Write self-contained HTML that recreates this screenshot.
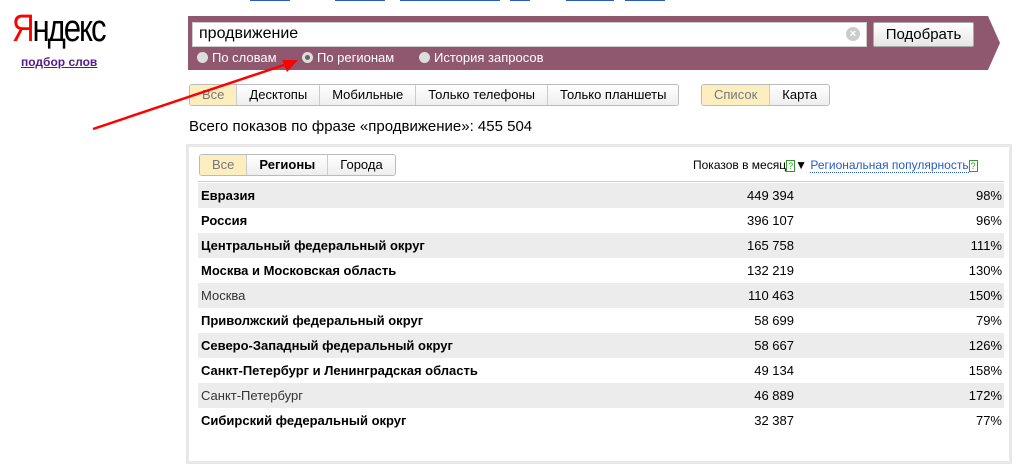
<!DOCTYPE html>
<html><head><meta charset="utf-8"><style>
*{margin:0;padding:0;box-sizing:border-box}
body{width:1028px;height:434px;overflow:hidden;background:#fff;font-family:"Liberation Sans",Arial,sans-serif;font-size:13px;color:#000;position:relative}
.a{position:absolute}
.logo{left:12px;top:8px;font-size:38px;letter-spacing:-2.5px;transform:scaleX(.82);transform-origin:left}
.sub{left:21px;top:55px;font-size:12px;font-weight:bold;color:#551a8b;text-decoration:underline}
.bar{left:188px;top:16px;width:812px;height:54px;background:#8f586e;clip-path:polygon(0 0,800px 0,812px 27px,800px 54px,0 54px)}
.inp{left:192px;top:22px;width:675px;height:25px;background:#fff;border:1px solid #ccc;font-size:16px;padding:2px 6px}
.clr{left:846px;top:27px;width:14px;height:14px;border-radius:50%;background:#ccc;color:#fff;font-size:11px;text-align:center;line-height:14px;font-weight:bold}
.btn{left:873px;top:22px;width:101px;height:25px;background:linear-gradient(#fff,#e6e6e6);border:1px solid #aaa;border-radius:2px;font-size:15px;text-align:center;line-height:23px}
.rad{top:50px;color:#fff;font-size:13px}
.rad i{display:inline-block;width:11px;height:11px;border-radius:50%;background:#ddd;margin-right:4px;vertical-align:-1px;position:relative}
.rad i.on:after{content:"";position:absolute;left:3px;top:3px;width:5px;height:5px;border-radius:50%;background:#666}
.tabs{display:flex;height:22px;border:1px solid #bbb;border-radius:3px;overflow:hidden}
.tabs div{padding:0 12px;line-height:20px;background:linear-gradient(#fff,#eee);border-left:1px solid #ccc;font-size:13px}
.tabs div:first-child{border-left:none}
.tabs .s{background:#fdeec0;color:#777}
.box{left:186px;top:144px;width:826px;height:320px;border:3px solid #e8e8e8}
.row{position:absolute;left:198px;width:806px;height:25px;line-height:25px;font-size:13px}
.row.g{background:#ececec}
.row b{position:absolute;left:3px}
.row span{position:absolute;left:3px;color:#333}
.row i{font-style:normal}
.row .n{position:absolute;right:210px}
.row .p{position:absolute;right:2px}
</style></head><body>
<div class="a" style="left:566px;top:0;width:48px;height:1px;background:#2a5bbf"></div>
<div class="a" style="left:250px;top:0;width:40px;height:1px;background:#2a5bbf"></div>
<div class="a" style="left:335px;top:0;width:50px;height:1px;background:#2a5bbf"></div>
<div class="a" style="left:400px;top:0;width:100px;height:1px;background:#2a5bbf"></div>
<div class="a" style="left:510px;top:0;width:20px;height:1px;background:#2a5bbf"></div>
<div class="a" style="left:625px;top:0;width:40px;height:1px;background:#2a5bbf"></div>
<div class="a logo"><span style="color:#f00">Я</span>ндекс</div>
<div class="a sub">подбор слов</div>
<div class="a bar"></div>
<div class="a inp">продвижение</div>
<div class="a clr">×</div>
<div class="a btn">Подобрать</div>
<div class="a rad" style="left:197px"><i></i>По словам</div>
<div class="a rad" style="left:302px"><i class="on"></i>По регионам</div>
<div class="a rad" style="left:419px"><i></i>История запросов</div>
<div class="a tabs" style="left:189px;top:84px"><div class="s">Все</div><div>Десктопы</div><div>Мобильные</div><div>Только телефоны</div><div>Только планшеты</div></div>
<div class="a tabs" style="left:701px;top:84px"><div class="s">Список</div><div>Карта</div></div>
<div class="a" style="left:189px;top:118px;font-size:15px">Всего показов по фразе «продвижение»: 455 504</div>
<div class="a box"></div>
<div class="a tabs" style="left:199px;top:154px"><div class="s">Все</div><div style="font-weight:bold">Регионы</div><div>Города</div></div>
<div class="a" style="left:693px;top:158px;font-size:12px">Показов в месяц<span style="color:#393;border:1px solid #393;font-size:9px;padding:0 1px">?</span>▼ <span style="color:#2a5bbf;border-bottom:1px dotted #2a5bbf">Региональная популярность</span><span style="color:#393;border:1px solid #393;font-size:9px;padding:0 1px">?</span></div>
<div class="a" style="left:198px;top:181px;width:806px;height:1px;background:#ccd"></div>
<div class="row g" style="top:183px"><b>Евразия</b><i class="n">449 394</i><i class="p">98%</i></div>
<div class="row" style="top:208px"><b>Россия</b><i class="n">396 107</i><i class="p">96%</i></div>
<div class="row g" style="top:233px"><b>Центральный федеральный округ</b><i class="n">165 758</i><i class="p">111%</i></div>
<div class="row" style="top:258px"><b>Москва и Московская область</b><i class="n">132 219</i><i class="p">130%</i></div>
<div class="row g" style="top:283px"><span>Москва</span><i class="n">110 463</i><i class="p">150%</i></div>
<div class="row" style="top:308px"><b>Приволжский федеральный округ</b><i class="n">58 699</i><i class="p">79%</i></div>
<div class="row g" style="top:333px"><b>Северо-Западный федеральный округ</b><i class="n">58 667</i><i class="p">126%</i></div>
<div class="row" style="top:358px"><b>Санкт-Петербург и Ленинградская область</b><i class="n">49 134</i><i class="p">158%</i></div>
<div class="row g" style="top:383px"><span>Санкт-Петербург</span><i class="n">46 889</i><i class="p">172%</i></div>
<div class="row" style="top:408px"><b>Сибирский федеральный округ</b><i class="n">32 387</i><i class="p">77%</i></div>
<svg class="a" style="left:0;top:0" width="1028" height="434"><line x1="93" y1="129" x2="290" y2="63" stroke="#f00" stroke-width="2.5"/><polygon points="298,60 282,60 287,72" fill="#f00"/></svg>
</body></html>
